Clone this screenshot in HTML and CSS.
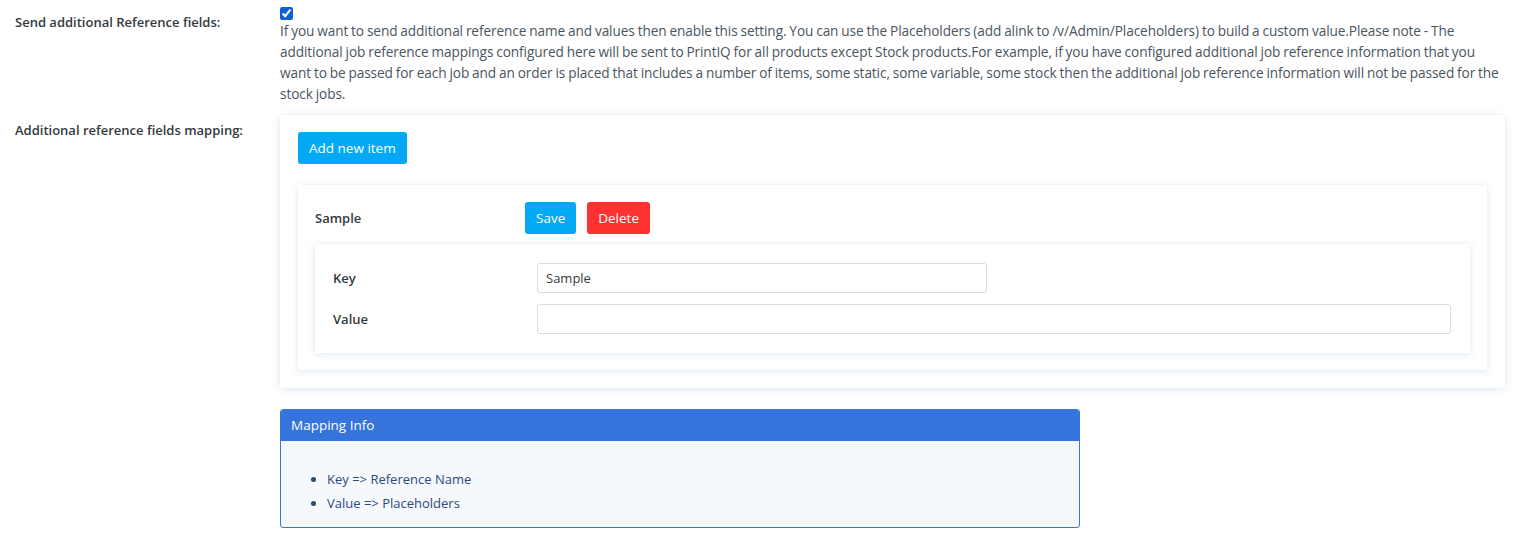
FILE: index.html
```html
<!DOCTYPE html>
<html lang="en">
<head>
    <meta charset="UTF-8">
    <meta name="viewport" content="width=device-width, initial-scale=1.0">
    <title>Additional Reference Fields</title>
    <link rel="stylesheet" href="styles.css">
</head>
<body>
    <div class="settings">
        <div class="form-row">
            <label class="row-label" for="send-ref">Send additional Reference fields:</label>
            <div class="row-field">
                <input type="checkbox" id="send-ref" class="check" checked>
                <p class="help">If you want to send additional reference name and values then enable this setting. You can use the Placeholders (add alink to /v/Admin/Placeholders) to build a custom value.Please note - The additional job reference mappings configured here will be sent to PrintIQ for all products except Stock products.For example, if you have configured additional job reference information that you want to be passed for each job and an order is placed that includes a number of items, some static, some variable, some stock then the additional job reference information will not be passed for the stock jobs.</p>
            </div>
        </div>

        <div class="form-row mapping-row">
            <label class="row-label">Additional reference fields mapping:</label>
            <div class="row-field">
                <div class="panel">
                    <button class="btn btn-info">Add new item</button>

                    <div class="item-card">
                        <div class="item-head">
                            <span class="item-name">Sample</span>
                            <div class="item-actions">
                                <button class="btn btn-info">Save</button>
                                <button class="btn btn-danger">Delete</button>
                            </div>
                        </div>
                        <div class="item-body">
                            <div class="field">
                                <label for="key">Key</label>
                                <input type="text" id="key" class="input input-key" value="Sample">
                            </div>
                            <div class="field">
                                <label for="value">Value</label>
                                <input type="text" id="value" class="input">
                            </div>
                        </div>
                    </div>
                </div>

                <div class="info-box">
                    <div class="info-title">Mapping Info</div>
                    <ul class="info-list">
                        <li>Key =&gt; Reference Name</li>
                        <li>Value =&gt; Placeholders</li>
                    </ul>
                </div>
            </div>
        </div>
    </div>
</body>
</html>
```

FILE: styles.css
```css
body {
    margin: 0;
    padding: 0 9px 0 15px;
    font-family: "Open Sans", Arial, sans-serif;
    font-size: 13px;
    color: #4a5560;
    background: #ffffff;
}
.form-row {
    display: grid;
    grid-template-columns: 265px 1fr;
}
.row-label {
    font-weight: 600;
    font-size: 13px;
    color: #333a40;
    padding-top: 13px;
}
.row-field {
    padding-top: 7px;
}
.check {
    display: block;
    margin: 0;
    width: 13px;
    height: 13px;
    accent-color: #0b62d6;
}
.help {
    margin: 0;
    line-height: 21px;
    font-size: 13.65px;
    word-spacing: -0.5px;
    letter-spacing: -0.1px;
}
.mapping-row {
    margin-top: 11px;
}
.mapping-row .row-label {
    padding-top: 6px;
}
.mapping-row .row-field {
    padding-top: 0;
}
.panel {
    background: #fff;
    padding: 17px 18px 18px 18px;
    box-shadow: 0 1px 7px rgba(110, 160, 200, 0.25);
}
.btn {
    border: none;
    border-radius: 3px;
    color: #fff;
    font-family: "Open Sans", Arial, sans-serif;
    font-size: 13.5px;
    height: 32px;
    padding: 0 11px;
    cursor: pointer;
}
.btn-info {
    background-color: #03a9f4;
}
.btn-danger {
    background-color: #ff3131;
}
.item-card {
    margin-top: 21px;
    padding: 17px;
    background: #fff;
    box-shadow: 0 1px 7px rgba(110, 160, 200, 0.25);
}
.item-head {
    display: grid;
    grid-template-columns: 210px 1fr;
    align-items: center;
}
.item-name {
    font-weight: 600;
    color: #333a40;
}
.item-actions {
    display: flex;
    gap: 11px;
}
.item-body {
    margin-top: 10px;
    padding: 19px 19px 19px 18px;
    box-shadow: 0 1px 7px rgba(110, 160, 200, 0.25);
    display: flex;
    flex-direction: column;
    gap: 11px;
}
.field {
    display: grid;
    grid-template-columns: 204px 1fr;
    align-items: center;
}
.field label {
    font-weight: 600;
    color: #333a40;
}
.input {
    height: 30px;
    box-sizing: border-box;
    border: 1px solid #dcdcdc;
    border-radius: 3px;
    padding: 0 8px;
    font-family: "Open Sans", Arial, sans-serif;
    font-size: 13px;
    color: #333a40;
}
.input-key {
    width: 450px;
}
.info-box {
    margin-top: 21px;
    width: 800px;
    box-sizing: border-box;
    border: 1px solid #3474db;
    border-radius: 3px;
    background: #f5f8fd;
    overflow: hidden;
}
.info-title {
    background: #3474db;
    color: #fff;
    height: 31px;
    line-height: 31px;
    padding: 0 10px;
    font-size: 13.5px;
}
.info-list {
    margin: 0;
    padding: 26px 0 12px 46px;
    line-height: 24px;
    color: #2c4a7a;
}
```
